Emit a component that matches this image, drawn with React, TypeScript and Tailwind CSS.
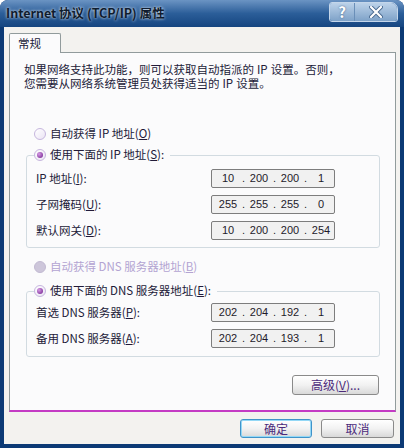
import type { ReactNode } from "react";

function Radio({ checked, disabled }: { checked?: boolean; disabled?: boolean }) {
  if (disabled) {
    return <span className="h-[12px] w-[12px] shrink-0 rounded-full border border-[#c2bad2] bg-[#cdc6da]" />;
  }
  return (
    <span className="flex h-[12px] w-[12px] shrink-0 items-center justify-center rounded-full border border-[#c6b6de] bg-gradient-to-br from-[#ffffff] to-[#ebe4f4]">
      {checked && (
        <span className="h-[6px] w-[6px] rounded-full bg-[radial-gradient(circle_at_35%_35%,#d79ae6,#6b1a88)]" />
      )}
    </span>
  );
}

function IpField({ octets }: { octets: string[] }) {
  return (
    <div className="flex h-[19px] w-[124px] items-center rounded-[2px] border border-[#7d7d7d] bg-[#f1f1f1] pl-[4px] font-['Liberation_Sans',sans-serif] text-[11px] text-[#1e1a2a]">
      {octets.map((o, i) => (
        <span key={i} className="flex items-center">
          <span className="w-[24px] text-center">{o}</span>
          {i < 3 && <span className="w-[7px] text-center">.</span>}
        </span>
      ))}
    </div>
  );
}

function Row({ label, octets }: { label: ReactNode; octets: string[] }) {
  return (
    <div className="flex h-[19px] items-center">
      <span className="w-[177px] pl-[2px]">{label}</span>
      <IpField octets={octets} />
    </div>
  );
}

function Button({ children, focused, className }: { children: ReactNode; focused?: boolean; className?: string }) {
  return (
    <button
      className={
        "flex items-center justify-center rounded-[3px] border bg-gradient-to-b from-[#ffffff] via-[#f2f2f2] to-[#d9d9d9] text-[12px] text-[#4b2a7b] " +
        (focused ? "border-[#3f93c9] shadow-[inset_0_0_0_1px_#93d8f6] " : "border-[#8a8a8a] ") +
        (className ?? "")
      }
    >
      {children}
    </button>
  );
}

export default function App() {
  return (
    <div className="h-[448px] w-[404px] overflow-hidden rounded-t-[8px] bg-[#0c3a75] font-['Noto_Sans_CJK_SC','Liberation_Sans',sans-serif] text-[11.5px] text-[#221a38]">
      {/* Title bar */}
      <div className="flex h-[27px] items-center justify-between bg-gradient-to-b from-[#6b94c3] via-[#2b5e99] to-[#154580] pl-[6px] pr-[6px]">
        <span className="text-[12.5px] font-bold text-[#0f1c2e] [text-shadow:0_0_3px_#ffffff]">
          Internet 协议 (TCP/IP) 属性
        </span>
        <div className="mt-[2px] flex h-[20px] self-start overflow-hidden rounded-[3px] rounded-tr-[7px] border border-[#c4d6ea]">
          <span className="flex w-[24px] items-center justify-center bg-gradient-to-b from-[#bcd2e9] to-[#7ea2c8] text-[15px] font-bold text-white [text-shadow:0_0_2px_#3b5d85]">
            ?
          </span>
          <span className="w-px bg-[#6a8fb8]" />
          <span className="flex w-[42px] items-center justify-center bg-gradient-to-b from-[#bcd2e9] to-[#7ea2c8]">
            <svg width="14" height="12" viewBox="0 0 14 12">
              <path d="M2 1 L12 11 M12 1 L2 11" stroke="#4a6a90" strokeWidth="4" strokeLinecap="round" />
              <path d="M2 1 L12 11 M12 1 L2 11" stroke="#ffffff" strokeWidth="2.2" strokeLinecap="round" />
            </svg>
          </span>
        </div>
      </div>

      {/* Client area */}
      <div className="mx-[4px] flex h-[417px] flex-col bg-[#f3f2ef] pl-[5px] pr-[4px]">
        <div className="pt-[6px]">
          <div className="relative z-10 -mb-px flex h-[20px] w-[52px] items-center rounded-t-[2px] border border-b-0 border-[#919b9c] bg-[#fbfbfc] pl-[8px]">
            常规
          </div>
        </div>

        <div className="flex h-[360px] flex-col border border-b-2 border-[#919b9c] border-b-[#c43bc4] bg-[#fbfbfc]">
          <div className="ml-[14px] mt-[9px] leading-[14px]">
            <div>
              如果网络支持此功能，则可以获取自动指派的<span className="px-[3px]">IP</span>设置。否则，
            </div>
            <div>
              您需要从网络系统管理员处获得适当的<span className="px-[3px]">IP</span>设置。
            </div>
          </div>

          <div className="mt-[36px] flex h-[16px] items-center gap-[4px] pl-[24px]">
            <Radio />
            <span>
              自动获得 IP 地址(<u>O</u>)
            </span>
          </div>

          <fieldset className="ml-[16px] mr-[15px] mt-[5px] rounded-[3px] border border-[#d2dbe1] px-[7px] pb-[7px]">
            <legend className="flex h-[16px] items-center gap-[4px] pr-[6px]">
              <Radio checked />
              <span>
                使用下面的 IP 地址(<u>S</u>):
              </span>
            </legend>
            <div className="flex flex-col gap-[7px] pt-[6px]">
              <Row label={<>IP 地址(<u>I</u>):</>} octets={["10", "200", "200", "1"]} />
              <Row label={<>子网掩码(<u>U</u>):</>} octets={["255", "255", "255", "0"]} />
              <Row label={<>默认网关(<u>D</u>):</>} octets={["10", "200", "200", "254"]} />
            </div>
          </fieldset>

          <div className="mt-[11px] flex h-[16px] items-center gap-[4px] pl-[24px] text-[#b3a4d2]">
            <Radio disabled />
            <span>
              自动获得 DNS 服务器地址(<u>B</u>)
            </span>
          </div>

          <fieldset className="ml-[16px] mr-[15px] mt-[8px] rounded-[3px] border border-[#d2dbe1] px-[7px] pb-[8px]">
            <legend className="flex h-[16px] items-center gap-[4px] pr-[6px]">
              <Radio checked />
              <span>
                使用下面的 DNS 服务器地址(<u>E</u>):
              </span>
            </legend>
            <div className="flex flex-col gap-[7px] pt-[4px]">
              <Row label={<>首选 DNS 服务器(<u>P</u>):</>} octets={["202", "204", "192", "1"]} />
              <Row label={<>备用 DNS 服务器(<u>A</u>):</>} octets={["202", "204", "193", "1"]} />
            </div>
          </fieldset>

          <div className="mr-[16px] mt-[18px] flex justify-end">
            <Button className="h-[20px] w-[87px]">
              高级(<u>V</u>)...
            </Button>
          </div>
        </div>

        <div className="mt-[7px] flex justify-end gap-[9px] pr-[2px]">
          <Button focused className="h-[19px] w-[72px]">
            确定
          </Button>
          <Button className="h-[19px] w-[73px]">取消</Button>
        </div>
      </div>
    </div>
  );
}
